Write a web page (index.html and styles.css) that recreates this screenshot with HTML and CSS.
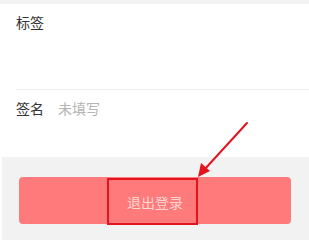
FILE: index.html
```html
<!DOCTYPE html>
<html>
<head>
<meta charset="utf-8">
<link rel="stylesheet" href="styles.css">
</head>
<body>
<div class="page">
  <div class="topbar"></div>
  <div class="tag-section">
    <div class="label">标签</div>
  </div>
  <div class="sign-row">
    <span class="label">签名</span>
    <span class="placeholder">未填写</span>
  </div>
  <div class="footer">
    <div class="logout">退出登录</div>
  </div>
  <div class="bottom"></div>
  <div class="highlight"></div>
  <svg class="arrow" width="309" height="243" viewBox="0 0 309 243">
    <line x1="247" y1="123" x2="204" y2="170" stroke="#e3141d" stroke-width="2" stroke-linecap="round"/>
    <polygon points="198,177 201,163 210,171" fill="#e3141d"/>
  </svg>
</div>
</body>
</html>
```
FILE: styles.css
```css
html, body {
  margin: 0;
  padding: 0;
  background: #ffffff;
}
.page {
  position: relative;
  width: 309px;
  height: 243px;
  overflow: hidden;
  font-family: "Noto Sans CJK SC", "Noto Sans", sans-serif;
  font-size: 14px;
  line-height: 20px;
  color: #333333;
}
.topbar {
  height: 4px;
  background: #f2f2f2;
}
.tag-section {
  height: 77px;
  padding: 8px 16px 0;
  border-bottom: 1px solid #f0f0f0;
  margin-left: 16px;
  padding-left: 0;
}
.sign-row {
  height: 59px;
  padding: 8px 16px 0;
  display: flex;
  gap: 14px;
}
.placeholder {
  color: #b4b4b4;
}
.footer {
  margin-left: 2px;
  background: #f2f2f2;
  padding: 20px 18px 16px 17px;
}
.logout {
  height: 47px;
  border-radius: 4px;
  background: #ff7a7a;
  color: #ffd6d2;
  display: flex;
  align-items: center;
  justify-content: center;
  font-size: 14px;
  padding-top: 2px;
  box-sizing: border-box;
}
.bottom {
  height: 3px;
}
.highlight {
  position: absolute;
  left: 107px;
  top: 178px;
  width: 87px;
  height: 43px;
  border: 2px solid #e3141d;
}
.arrow {
  position: absolute;
  left: 0;
  top: 0;
}
```
